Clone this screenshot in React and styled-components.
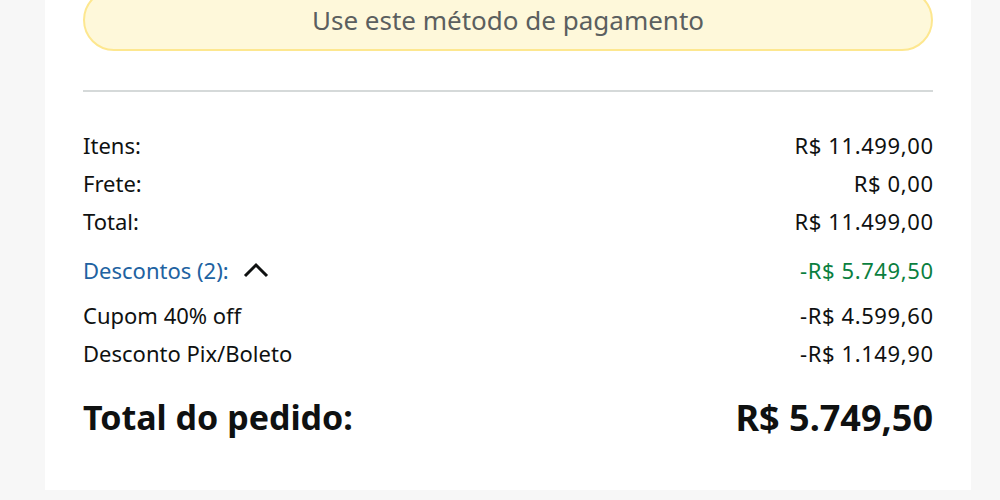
import React from 'react'
import styled, { createGlobalStyle } from 'styled-components';

const GlobalStyle = createGlobalStyle`
body {
  margin: 0;
  background-color: #f7f7f7;
  font-family: "Noto Sans", "Open Sans", sans-serif;
  color: #0f1111;
  overflow: hidden;
}
`;

const Page = styled.div`
padding: 0 0 10px 45px;
`;

const Card = styled.div`
width: 926px;
box-sizing: border-box;
margin-top: -31px;
padding: 20px 38px 48px;
background-color: #ffffff;
display: flex;
flex-direction: column;
`;

const PayButton = styled.button`
height: 62px;
width: 100%;
border-radius: 31px;
background-color: #fef8da;
border: 2px solid #fde78f;
color: #5b5f5f;
font-family: "Noto Sans", sans-serif;
font-size: 26px;
padding: 0;
cursor: default;
`;

const Divider = styled.hr`
margin: 39px 0 0;
border: 0;
height: 2px;
background-color: #d5d9d9;
`;

const Summary = styled.div`
display: flex;
flex-direction: column;
margin-top: 34px;
`;

const Row = styled.div`
display: flex;
justify-content: space-between;
align-items: center;
height: 38px;
font-size: 22px;
margin-top: ${({ $gap }) => $gap || 0}px;
color: ${({ $color }) => $color || '#0f1111'};
`;

const Amount = styled.span`
letter-spacing: 0.6px;
margin-right: -0.6px;
`;

const Toggle = styled.span`
display: flex;
align-items: center;
gap: 14px;
color: #2162a1;
`;

const TotalRow = styled.div`
display: flex;
justify-content: space-between;
align-items: center;
height: 50px;
margin-top: 20px;
font-size: 34px;
font-weight: 700;
`;

const TotalValue = styled.span`
font-size: 36px;
`;

const Chevron = () => (
  <svg width="26" height="16" viewBox="0 0 26 16">
    <path d="M2 14 L13 3 L24 14" fill="none" stroke="#0f1111" strokeWidth="3" />
  </svg>
);

const lines = [
  ['Itens:', 'R$ 11.499,00'],
  ['Frete:', 'R$ 0,00'],
  ['Total:', 'R$ 11.499,00'],
];

const App = () => {
  return (
    <Page>
      <GlobalStyle />
      <Card>
        <PayButton>Use este método de pagamento</PayButton>
        <Divider />
        <Summary>
          {lines.map(([label, value]) => (
            <Row key={label}>
              <span>{label}</span>
              <Amount>{value}</Amount>
            </Row>
          ))}
          <Row $gap={11} $color="#0b7f3f">
            <Toggle>Descontos (2): <Chevron /></Toggle>
            <Amount>-R$ 5.749,50</Amount>
          </Row>
          <Row $gap={7}>
            <span>Cupom 40% off</span>
            <Amount>-R$ 4.599,60</Amount>
          </Row>
          <Row>
            <span>Desconto Pix/Boleto</span>
            <Amount>-R$ 1.149,90</Amount>
          </Row>
        </Summary>
        <TotalRow>
          <span>Total do pedido:</span>
          <TotalValue>R$ 5.749,50</TotalValue>
        </TotalRow>
      </Card>
    </Page>
  )
}

export default App
